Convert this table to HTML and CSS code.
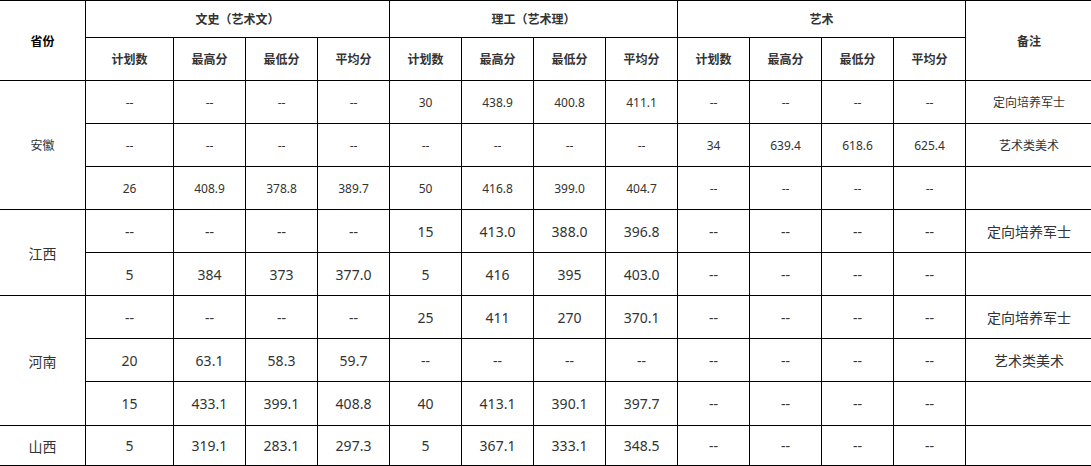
FILE: index.html
```html
<!DOCTYPE html>
<html lang="zh">
<head>
<meta charset="utf-8">
<title>录取分数</title>
<link rel="stylesheet" href="styles.css">
</head>
<body>
<table class="score">
  <colgroup>
    <col class="c-prov">
    <col class="c-plan1">
    <col class="c-n"><col class="c-n"><col class="c-n">
    <col class="c-n"><col class="c-n"><col class="c-n"><col class="c-n">
    <col class="c-n"><col class="c-n"><col class="c-n"><col class="c-n">
    <col class="c-note">
  </colgroup>
  <thead>
    <tr class="h1">
      <th rowspan="2" class="first prov-h">省份</th>
      <th colspan="4">文史（艺术文）</th>
      <th colspan="4">理工（艺术理）</th>
      <th colspan="4">艺术</th>
      <th rowspan="2">备注</th>
    </tr>
    <tr class="h2">
      <th>计划数</th><th>最高分</th><th>最低分</th><th>平均分</th>
      <th>计划数</th><th>最高分</th><th>最低分</th><th>平均分</th>
      <th>计划数</th><th>最高分</th><th>最低分</th><th>平均分</th>
    </tr>
  </thead>
  <tbody class="small">
    <tr class="r">
      <td rowspan="3" class="first">安徽</td>
      <td>--</td><td>--</td><td>--</td><td>--</td>
      <td>30</td><td>438.9</td><td>400.8</td><td>411.1</td>
      <td>--</td><td>--</td><td>--</td><td>--</td>
      <td>定向培养军士</td>
    </tr>
    <tr class="r">
      <td>--</td><td>--</td><td>--</td><td>--</td>
      <td>--</td><td>--</td><td>--</td><td>--</td>
      <td>34</td><td>639.4</td><td>618.6</td><td>625.4</td>
      <td>艺术类美术</td>
    </tr>
    <tr class="r">
      <td>26</td><td>408.9</td><td>378.8</td><td>389.7</td>
      <td>50</td><td>416.8</td><td>399.0</td><td>404.7</td>
      <td>--</td><td>--</td><td>--</td><td>--</td>
      <td></td>
    </tr>
  </tbody>
  <tbody class="big">
    <tr class="r">
      <td rowspan="2" class="first">江西</td>
      <td>--</td><td>--</td><td>--</td><td>--</td>
      <td>15</td><td>413.0</td><td>388.0</td><td>396.8</td>
      <td>--</td><td>--</td><td>--</td><td>--</td>
      <td>定向培养军士</td>
    </tr>
    <tr class="r">
      <td>5</td><td>384</td><td>373</td><td>377.0</td>
      <td>5</td><td>416</td><td>395</td><td>403.0</td>
      <td>--</td><td>--</td><td>--</td><td>--</td>
      <td></td>
    </tr>
    <tr class="r">
      <td rowspan="3" class="first">河南</td>
      <td>--</td><td>--</td><td>--</td><td>--</td>
      <td>25</td><td>411</td><td>270</td><td>370.1</td>
      <td>--</td><td>--</td><td>--</td><td>--</td>
      <td>定向培养军士</td>
    </tr>
    <tr class="r">
      <td>20</td><td>63.1</td><td>58.3</td><td>59.7</td>
      <td>--</td><td>--</td><td>--</td><td>--</td>
      <td>--</td><td>--</td><td>--</td><td>--</td>
      <td>艺术类美术</td>
    </tr>
    <tr class="r r44">
      <td>15</td><td>433.1</td><td>399.1</td><td>408.8</td>
      <td>40</td><td>413.1</td><td>390.1</td><td>397.7</td>
      <td>--</td><td>--</td><td>--</td><td>--</td>
      <td></td>
    </tr>
    <tr class="r last">
      <td class="first">山西</td>
      <td>5</td><td>319.1</td><td>283.1</td><td>297.3</td>
      <td>5</td><td>367.1</td><td>333.1</td><td>348.5</td>
      <td>--</td><td>--</td><td>--</td><td>--</td>
      <td></td>
    </tr>
  </tbody>
</table>
</body>
</html>
```
FILE: styles.css
```css
html, body {
  margin: 0;
  padding: 0;
  background: #fff;
}
body {
  font-family: "Noto Sans", "Noto Sans CJK SC", sans-serif;
  color: #333;
  overflow: hidden;
}
.score {
  border-collapse: collapse;
  table-layout: fixed;
  width: 1093px;
  margin-left: -1px;
}
.c-prov { width: 86px; }
.c-plan1 { width: 88px; }
.c-n { width: 72px; }
.c-note { width: 127px; }

.score th,
.score td {
  border: 1px solid #000;
  padding: 0;
  text-align: center;
  vertical-align: middle;
  white-space: nowrap;
}
.score th {
  font-size: 12px;
  font-weight: bold;
  color: #333;
}
.score .prov-h { color: #000; }
.h1 th { height: 36px; }
.h2 th { height: 42px; }
.r td { height: 42px; }
.r44 td { height: 43px; }
.last td { height: 39px; }
.small td { font-size: 12px; }
.big td { font-size: 14px; }
```
